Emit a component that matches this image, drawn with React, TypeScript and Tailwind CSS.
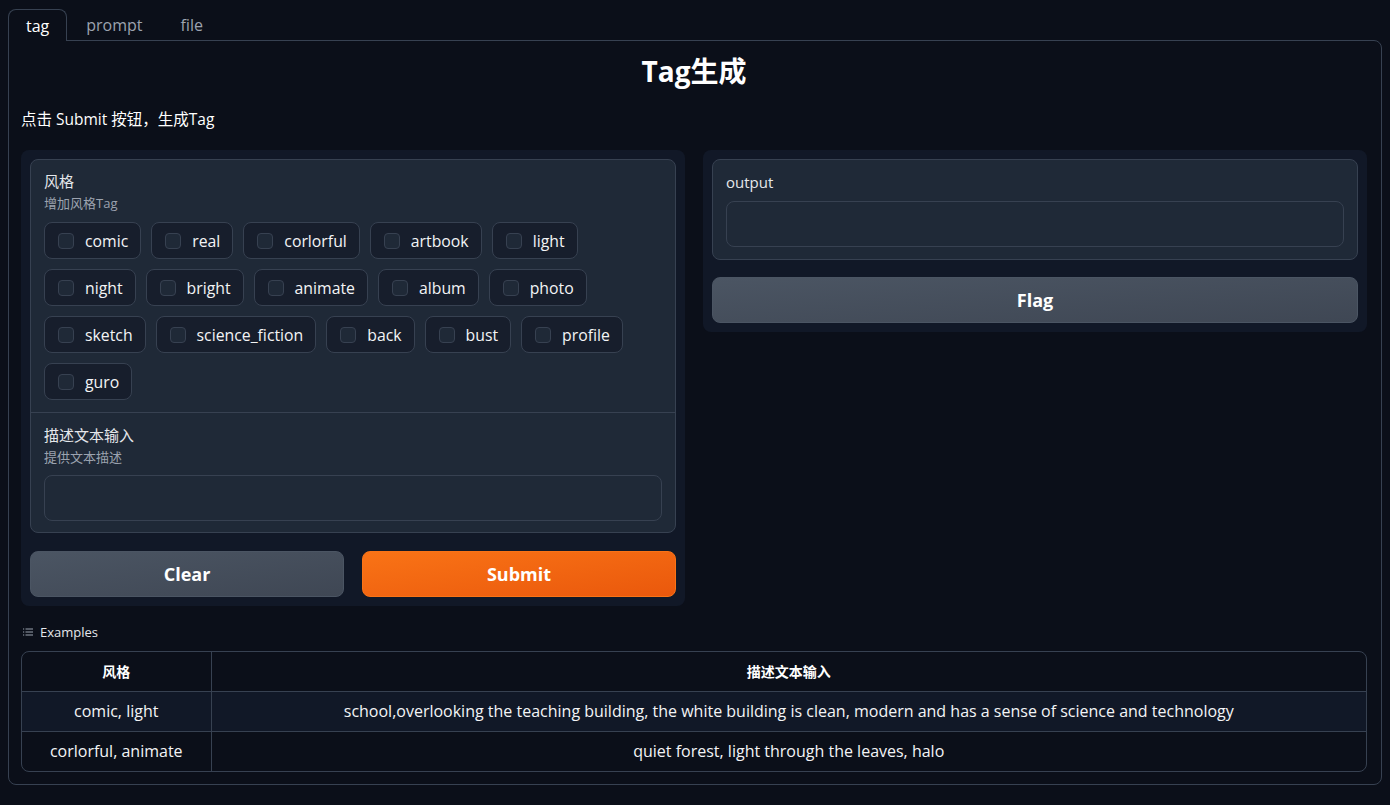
import { useState } from "react";

const STYLE_TAGS = [
  "comic",
  "real",
  "corlorful",
  "artbook",
  "light",
  "night",
  "bright",
  "animate",
  "album",
  "photo",
  "sketch",
  "science_fiction",
  "back",
  "bust",
  "profile",
  "guro",
];

const EXAMPLES = [
  {
    style: "comic, light",
    text: "school,overlooking the teaching building, the white building is clean, modern and has a sense of science and technology",
  },
  {
    style: "corlorful, animate",
    text: "quiet forest, light through the leaves, halo",
  },
];

const FONT = {
  fontFamily: '"Open Sans", "Noto Sans CJK SC", sans-serif',
};

const TagCheckbox = ({ name }: { name: string }) => {
  const [checked, setChecked] = useState(false);
  return (
    <label
      className="flex h-[37px] cursor-pointer items-center gap-[11px] rounded-[8px] border border-[#374151] bg-[#171e2c] pl-[13px] pr-[12px] text-[15.8px] text-[#f3f4f6]"
      onClick={() => setChecked(!checked)}
    >
      <span
        className={
          checked
            ? "h-4 w-4 rounded-[4px] border border-[#f97316] bg-[#f97316]"
            : "h-4 w-4 rounded-[4px] border border-[#374151] bg-[#1f2937]"
        }
      />
      <span className="leading-[20px]">{name}</span>
    </label>
  );
};

const ListIcon = () => (
  <svg width="12" height="12" viewBox="0 0 12 12" fill="none" className="text-[#9ca3af]">
    <rect x="1" y="2.5" width="1.2" height="1" fill="currentColor" />
    <rect x="1" y="5.5" width="1.2" height="1" fill="currentColor" />
    <rect x="1" y="8.5" width="1.2" height="1" fill="currentColor" />
    <rect x="3.5" y="2.5" width="7.5" height="1" fill="currentColor" />
    <rect x="3.5" y="5.5" width="7.5" height="1" fill="currentColor" />
    <rect x="3.5" y="8.5" width="7.5" height="1" fill="currentColor" />
  </svg>
);

export default function App() {
  const [tab, setTab] = useState("tag");

  return (
    <div className="min-h-[805px] bg-[#0b0f19] px-2 pt-[9px] text-[#e5e7eb]" style={FONT}>
      {/* tabs */}
      <div className="flex h-[31px] items-end">
        {["tag", "prompt", "file"].map((t) =>
          t === tab ? (
            <button
              key={t}
              className="relative z-10 mb-[-1px] h-[32px] rounded-t-[8px] border border-b-0 border-[#374151] bg-[#0b0f19] px-[17px] text-[16px] text-white"
              onClick={() => setTab(t)}
            >
              {t}
            </button>
          ) : (
            <button
              key={t}
              className="h-[31px] px-[19px] text-[16px] text-[#9ca3af]"
              onClick={() => setTab(t)}
            >
              {t}
            </button>
          )
        )}
      </div>

      {/* panel */}
      <div className="rounded-b-[8px] rounded-tr-[8px] border border-[#374151] pb-3 pl-3 pr-[14px] pt-3">
        <h1 className="text-center text-[28px] font-bold leading-[36px] text-white">Tag生成</h1>
        <p className="mt-[19px] text-[15.5px] leading-[22px] text-white">点击 Submit 按钮，生成Tag</p>

        <div className="mt-[20px] flex items-start gap-[18px]">
          {/* left column */}
          <div className="flex flex-1 flex-col gap-[18px] rounded-[8px] bg-[#111827] p-[9px]">
            <div className="rounded-[8px] border border-[#374151] bg-[#1f2937]">
              <div className="border-b border-[#374151] px-[13px] pb-[12px] pt-[11px]">
                <div className="text-[15px] leading-[20px] text-[#e5e7eb]">风格</div>
                <div className="mt-[3px] text-[13px] leading-[18px] text-[#9ca3af]">增加风格Tag</div>
                <div className="mt-[10px] flex flex-wrap gap-[10px]">
                  {STYLE_TAGS.map((t) => (
                    <TagCheckbox key={t} name={t} />
                  ))}
                </div>
              </div>
              <div className="px-[13px] pb-[11px] pt-[12px]">
                <div className="text-[15px] leading-[20px] text-[#e5e7eb]">描述文本输入</div>
                <div className="mt-[3px] text-[13px] leading-[18px] text-[#9ca3af]">提供文本描述</div>
                <textarea
                  className="mt-[9px] block h-[46px] w-full resize-none rounded-[8px] border border-[#374151] bg-[#1f2937] px-3 py-2 text-[15px] text-white outline-none"
                  rows={1}
                />
              </div>
            </div>
            <div className="flex gap-[18px]">
              <button className="h-[46px] flex-1 rounded-[8px] border border-[#4b5563] bg-gradient-to-br from-[#4b5563] to-[#3f4754] text-[18px] font-bold text-white">
                Clear
              </button>
              <button className="h-[46px] flex-1 rounded-[8px] border border-[#f97316] bg-gradient-to-br from-[#f97316] to-[#ea580c] text-[18px] font-bold text-white">
                Submit
              </button>
            </div>
          </div>

          {/* right column */}
          <div className="flex flex-1 flex-col gap-[17px] rounded-[8px] bg-[#111827] p-[9px]">
            <div className="rounded-[8px] border border-[#374151] bg-[#1f2937] px-[13px] pb-[12px] pt-[12px]">
              <div className="text-[15px] leading-[20px] text-[#e5e7eb]">output</div>
              <textarea
                className="mt-[9px] block h-[46px] w-full resize-none rounded-[8px] border border-[#374151] bg-[#1f2937] px-3 py-2 text-[15px] text-white outline-none"
                rows={1}
                readOnly
              />
            </div>
            <button className="h-[46px] w-full rounded-[8px] border border-[#4b5563] bg-gradient-to-br from-[#4b5563] to-[#3f4754] text-[18px] font-bold text-white">
              Flag
            </button>
          </div>
        </div>

        {/* examples */}
        <div className="mt-[16px] flex items-center gap-[6px] pl-[1px] text-[13px] leading-[20px] text-[#e5e7eb]">
          <ListIcon />
          Examples
        </div>
        <div className="mt-[9px] overflow-hidden rounded-[8px] border border-[#374151]">
          <table className="w-full border-collapse text-center">
            <thead>
              <tr className="h-[39px]">
                <th className="w-[189px] border-r border-[#374151] text-[14px] font-bold text-white">风格</th>
                <th className="text-[14px] font-bold text-white">描述文本输入</th>
              </tr>
            </thead>
            <tbody>
              {EXAMPLES.map((ex, i) => (
                <tr
                  key={ex.style}
                  className={i === 0 ? "h-[40px] border-t border-[#374151] bg-[#111827]" : "h-[40px] border-t border-[#374151]"}
                >
                  <td className="border-r border-[#374151] text-[16px] text-[#f3f4f6]">{ex.style}</td>
                  <td className="text-[16px] text-[#f3f4f6]">{ex.text}</td>
                </tr>
              ))}
            </tbody>
          </table>
        </div>
      </div>
    </div>
  );
}
